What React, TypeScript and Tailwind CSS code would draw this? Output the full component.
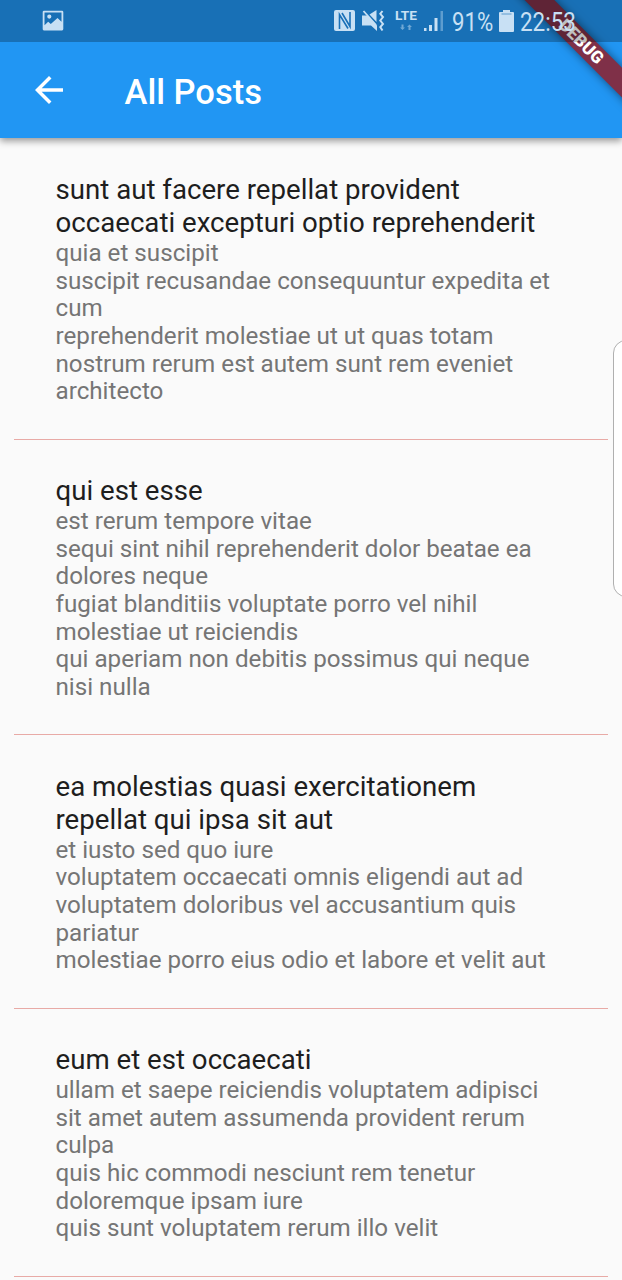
const posts = [
  {
    title: ["sunt aut facere repellat provident", "occaecati excepturi optio reprehenderit"],
    body: ["quia et suscipit", "suscipit recusandae consequuntur expedita et", "cum", "reprehenderit molestiae ut ut quas totam", "nostrum rerum est autem sunt rem eveniet", "architecto"],
  },
  {
    title: ["qui est esse"],
    body: ["est rerum tempore vitae", "sequi sint nihil reprehenderit dolor beatae ea", "dolores neque", "fugiat blanditiis voluptate porro vel nihil", "molestiae ut reiciendis", "qui aperiam non debitis possimus qui neque", "nisi nulla"],
  },
  {
    title: ["ea molestias quasi exercitationem", "repellat qui ipsa sit aut"],
    body: ["et iusto sed quo iure", "voluptatem occaecati omnis eligendi aut ad", "voluptatem doloribus vel accusantium quis", "pariatur", "molestiae porro eius odio et labore et velit aut"],
  },
  {
    title: ["eum et est occaecati"],
    body: ["ullam et saepe reiciendis voluptatem adipisci", "sit amet autem assumenda provident rerum", "culpa", "quis hic commodi nesciunt rem tenetur", "doloremque ipsam iure", "quis sunt voluptatem rerum illo velit"],
  },
];

function StatusBar() {
  return (
    <div className="relative z-30 flex h-[41.5px] items-center bg-black/25 text-[#c8e0f4]">
      <svg className="ml-[42px] h-[21px] w-[22px] shrink-0" viewBox="0 0 22 21" fill="currentColor">
        <path fillRule="evenodd" d="M2 .8h18a1.3 1.3 0 0 1 1.3 1.3v17a1.3 1.3 0 0 1-1.3 1.3H2A1.3 1.3 0 0 1 .7 19V2.100A1.3 1.3 0 0 1 2 .8zM2.500 2.500v12.700l3.700-3.400 2.600 2.200 6.700-6 4 3.700V2.500zM7.300 4.500a2.100 2.100 0 1 1 0 4.200 2.100 2.100 0 0 1 0-4.200z" />
      </svg>
      <svg className="ml-[269px] h-[24px] w-[114px] shrink-0" viewBox="333 9 114 24" fill="currentColor">
        <rect x="334" y="10" width="21" height="21" rx="2" />
        <path d="M339.500 29V14.500l8.500 14M350 12v14.500L342 13" fill="none" stroke="#1a70b7" strokeWidth="1.600" />
        <path d="M362 15.500h5.500l9.500 10v5.500l-6-5.500h-9zM369.500 14.500l7-4.500v12z" />
        <path d="M363.500 11l12.500 14" stroke="#c8e0f4" strokeWidth="1.800" />
        <path d="M382.500 11l-2.200 2.800 2.700 3.200-2.700 3.500 2.700 3.500-2.700 3 2.200 3.500" fill="none" stroke="currentColor" strokeWidth="2" />
        <text x="395" y="20" fontFamily="Roboto" fontWeight="700" fontSize="13" textLength="22" lengthAdjust="spacingAndGlyphs">LTE</text>
        <path d="M401.500 24.500h2v3h1.500l-2.500 2.500-2.500-2.500h1.500zM408.500 30v-3h-1.500l2.500-2.500 2.500 2.500h-1.500v3z" opacity=".5" />
        <path d="M424 31v-3h2.500v3zM429 31v-6h3v6zM434.500 31V18h3v13z" />
        <path d="M440.500 11h2.500v20h-2.500z" opacity=".4" />
      </svg>
      <span className="ml-[4.500px] mt-[3px] w-[42px] origin-left scale-x-[0.87] whitespace-nowrap text-[25.500px] leading-[41px]">91%</span>
      <svg className="ml-[5px] h-[22px] w-[15px] shrink-0" viewBox="0 0 15 22" fill="currentColor">
        <path d="M4 0h7v2h3a1 1 0 0 1 1 1v18a1 1 0 0 1-1 1H1a1 1 0 0 1-1-1V3a1 1 0 0 1 1-1h3z" />
        <path d="M2.500 4h10" stroke="#1a70b7" strokeWidth=".6" />
      </svg>
      <span className="ml-[6.500px] mt-[3px] w-[57px] origin-left scale-x-[0.88] whitespace-nowrap text-[25.500px] leading-[41px]">22:53</span>
    </div>
  );
}

export default function App() {
  return (
    <div className="relative h-[1280px] w-[622px] overflow-hidden bg-[#fafafa] font-['Roboto',sans-serif]">
      <header className="relative z-10 h-[138px] bg-[#2196f3] shadow-[0_3px_7px_rgba(0,0,0,0.4)]">
        <StatusBar />
        <div className="flex h-[96.5px] items-center text-white">
          <svg className="ml-[34.500px] h-[28px] w-[28px]" viewBox="4 4 16 16" fill="currentColor">
            <path d="M20 11H7.830l5.590-5.590L12 4l-8 8 8 8 1.410-1.410L7.830 13H20v-2z" />
          </svg>
          <h1 className="ml-[62px] mt-[6px] whitespace-nowrap text-[34.500px] font-medium">All Posts</h1>
        </div>
        <div className="absolute left-[482px] top-[32px] z-20 flex h-[20.700px] w-[200px] rotate-45 items-center justify-center bg-[#7f3048] pr-[2px] text-[17.200px] font-black leading-none text-white shadow-[0_0_10px_rgba(0,0,0,0.5)]">
          DEBUG
        </div>
      </header>
      <main className="mt-[0.500px] flex flex-col">
        {posts.map((post) => (
          <article key={post.title[0]} className="mx-[14px] border-b border-[#e8aaa6] pb-[33.200px] pl-[41.500px] pt-[34.600px]">
            <h2 className="pb-[0.300px] text-[27.650px] leading-[33px] text-[#1e1e1e]">
              {post.title.map((line) => (
                <span key={line} className="block whitespace-nowrap">{line}</span>
              ))}
            </h2>
            <p className="relative top-[0.500px] text-[24.200px] leading-[27.650px] text-[#757575]">
              {post.body.map((line) => (
                <span key={line} className="block whitespace-nowrap">{line}</span>
              ))}
            </p>
          </article>
        ))}
      </main>
      <div className="absolute left-[613px] top-[340px] h-[257px] w-[30px] rounded-[13px] border border-[#b0b0b0] bg-white" />
    </div>
  );
}
